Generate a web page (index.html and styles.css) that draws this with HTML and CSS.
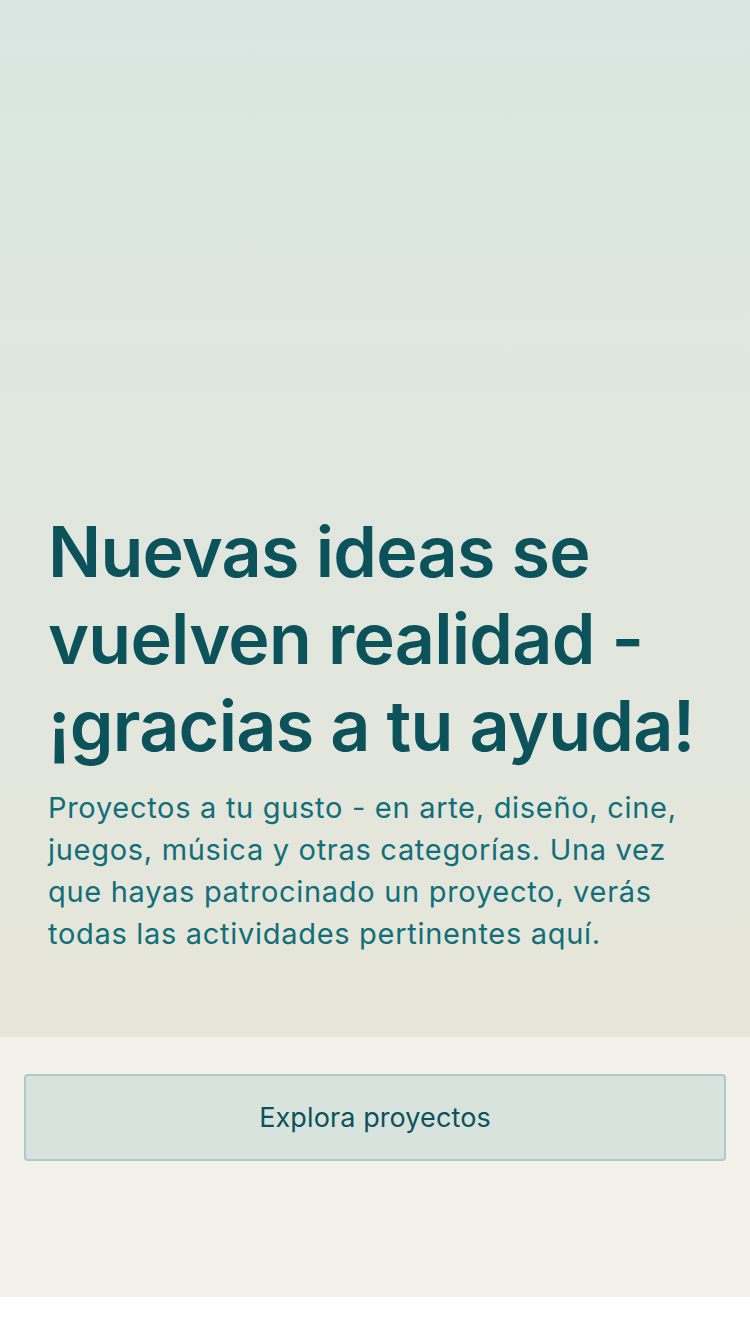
FILE: index.html
```html
<!DOCTYPE html>
<html lang="es">
<head>
<meta charset="utf-8">
<link rel="stylesheet" href="styles.css">
</head>
<body>
<main class="screen">
  <section class="hero">
    <h1 class="title">Nuevas ideas se vuelven realidad - ¡gracias a tu ayuda!</h1>
    <p class="lead">Proyectos a tu gusto - en arte, diseño, cine, juegos, música y otras categorías. Una vez que hayas patrocinado un proyecto, verás todas las actividades pertinentes aquí.</p>
  </section>
  <section class="actions">
    <button class="explore">Explora proyectos</button>
  </section>
</main>
</body>
</html>
```
FILE: styles.css
```css
html, body {
  margin: 0;
  padding: 0;
  background: #ffffff;
}
body {
  width: 750px;
  height: 1334px;
  font-family: Inter, "Noto Sans", sans-serif;
}
.screen {
  display: flex;
  flex-direction: column;
}
.hero {
  height: 1037px;
  box-sizing: border-box;
  display: flex;
  flex-direction: column;
  justify-content: flex-end;
  padding: 0 40px 82px 48px;
  background: linear-gradient(180deg, #d9e7e2 0%, #e7e6da 100%);
}
.title {
  margin: 0;
  font-size: 70px;
  line-height: 87px;
  font-weight: 600;
  letter-spacing: -0.75px;
  color: #0b525b;
}
.lead {
  margin: 18px 0 0;
  font-size: 29px;
  line-height: 42px;
  font-weight: 400;
  letter-spacing: 0.7px;
  color: #106f79;
}
.actions {
  height: 260px;
  box-sizing: border-box;
  padding: 37px 24px 0;
  background: linear-gradient(180deg, #f2f2ea 0%, #f3f0e9 100%);
}
.explore {
  display: block;
  width: 100%;
  height: 87px;
  box-sizing: border-box;
  border: 2px solid #abcacb;
  border-radius: 4px;
  background: #d9e3de;
  font-family: Inter, "Noto Sans", sans-serif;
  font-size: 27px;
  letter-spacing: 0.1px;
  color: #0b525b;
  padding: 0;
}
```
